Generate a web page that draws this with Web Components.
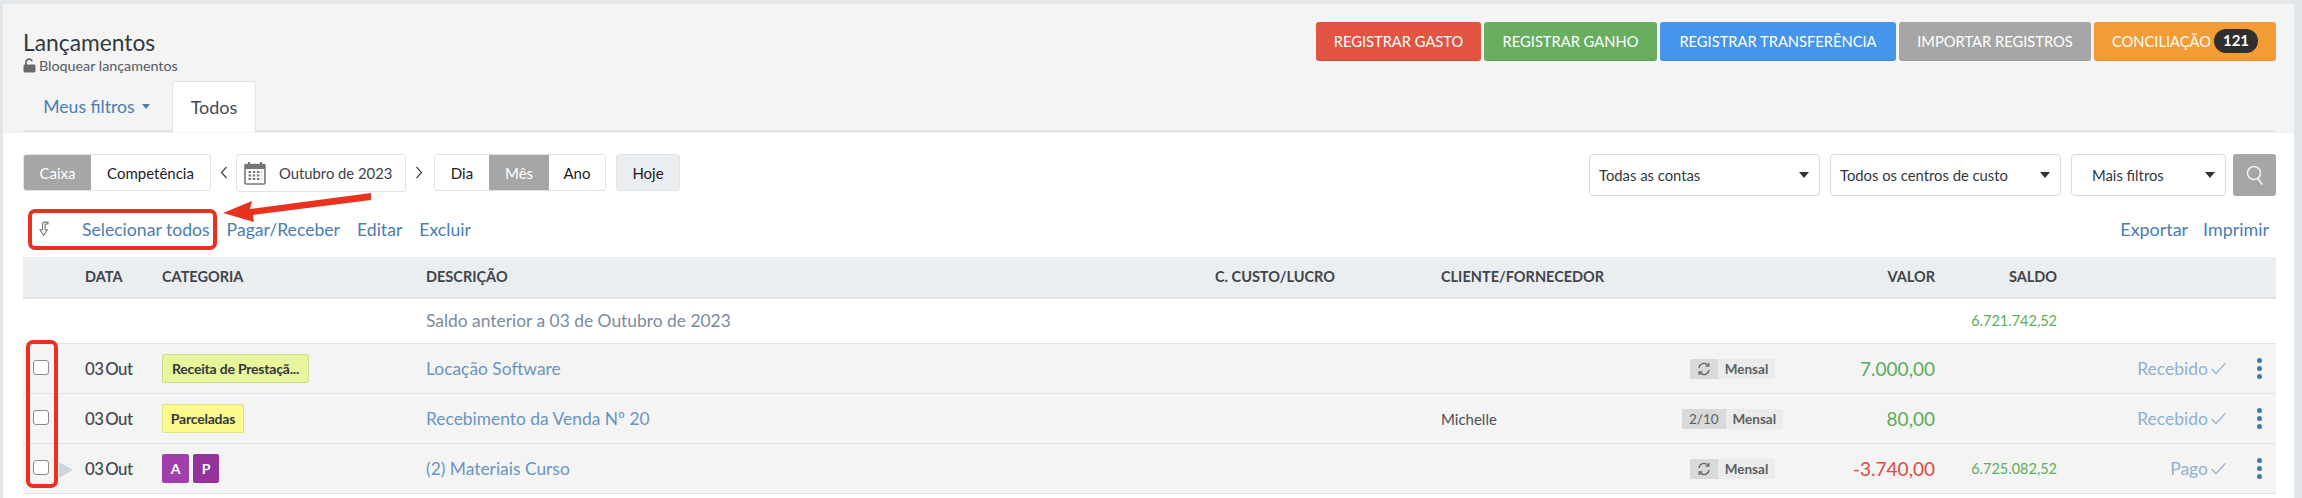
<!DOCTYPE html>
<html lang="pt-BR">
<head>
<meta charset="utf-8">
<title>Lançamentos</title>
<style>
    html, body { margin: 0; padding: 0; background: #fff; }
    body { font-family: Lato, "Liberation Sans", sans-serif; height: 498px; overflow: hidden; }
</style>
</head>
<body>
<lancamentos-page></lancamentos-page>

<script>
class ActionButton extends HTMLElement {
    constructor() {
        super();
        const shadowRoot = this.attachShadow({ mode: 'open' });
        shadowRoot.innerHTML = `
            <style>
                :host {
                    display: flex; align-items: center; justify-content: center;
                    height: 39px; box-sizing: border-box; border-radius: 3px;
                    background: var(--bg); color: #fff; font-size: 14.7px;
                    border-bottom: 1px solid rgba(0,0,0,.08);
                    white-space: nowrap;
                }
            </style>
            <slot></slot>
        `;
    }
    connectedCallback() {
        this.style.setProperty('--bg', this.getAttribute('color'));
        this.style.width = this.getAttribute('w') + 'px';
    }
}

class PageHeader extends HTMLElement {
    constructor() {
        super();
        const shadowRoot = this.attachShadow({ mode: 'open' });
        shadowRoot.innerHTML = `
            <style>
                :host { display: block; height: 129px; background: #f4f4f4; box-sizing: border-box; padding: 18px 18px 0 20px; position: relative; }
                .top { display: flex; justify-content: space-between; height: 59px; }
                h1 { margin: 7px 0 0; font-size: 22.8px; font-weight: 400; line-height: 26px; color: #33383d; }
                .lock { display: flex; align-items: center; gap: 3px; margin-top: 2px; font-size: 14.3px; line-height: 17px; color: #555b61; }
                .buttons { display: flex; gap: 3px; }
                .badge { display: inline-block; margin-left: 3px; width: 44px; height: 24px; line-height: 23px; border-radius: 12px; background: #2f2f2f; color: #fff; font-weight: 700; font-size: 15px; text-align: center; }
                .tabs { display: flex; height: 51px; border-bottom: 2px solid #e2e4e6; box-sizing: border-box; align-items: flex-end; }
                .tab { box-sizing: border-box; height: 51px; display: flex; align-items: center; justify-content: center; font-size: 18px; margin-bottom: -2px; }
                .filters { width: 149px; color: #4a7db3; font-size: 17.6px; gap: 7px; padding-right: 2px; }
                .caret { width: 0; height: 0; border: 4px solid transparent; border-top: 5px solid #4a7db3; border-bottom: 0; }
                .active { width: 84px; background: #fff; color: #444a50; border: 1px solid #e2e4e6; border-bottom: 0; border-radius: 4px 4px 0 0; }
            </style>
            <div class="top">
                <div>
                    <h1>Lançamentos</h1>
                    <div class="lock">
                        <svg width="13" height="15" viewBox="0 0 13 15"><path d="M3 7V4.200a3.200 3.200 0 0 1 6.200-1" fill="none" stroke="#6a6a6a" stroke-width="1.700"/><rect x="0.500" y="6.500" width="12" height="8" rx="1.400" fill="#6a6a6a"/></svg>
                        Bloquear lançamentos
                    </div>
                </div>
                <div class="buttons">
                    <action-button color="#e25341" w="165">REGISTRAR GASTO</action-button>
                    <action-button color="#69ad5f" w="173">REGISTRAR GANHO</action-button>
                    <action-button color="#4596ea" w="236">REGISTRAR TRANSFERÊNCIA</action-button>
                    <action-button color="#a6a6a6" w="192">IMPORTAR REGISTROS</action-button>
                    <action-button color="#f39c35" w="182">CONCILIAÇÃO<span class="badge">121</span></action-button>
                </div>
            </div>
            <div class="tabs">
                <div class="tab filters">Meus filtros <span class="caret"></span></div>
                <div class="tab active">Todos</div>
            </div>
        `;
    }
}

class SegmentGroup extends HTMLElement {
    constructor() {
        super();
        const shadowRoot = this.attachShadow({ mode: 'open' });
        shadowRoot.innerHTML = `
            <style>
                :host { display: inline-flex; height: 37px; box-sizing: border-box; border: 1px solid #e0e2e4; border-radius: 3px; overflow: hidden; background: #fff; }
                .seg { display: flex; align-items: center; justify-content: center; font-size: 15px; color: #1c1c1c; box-sizing: border-box; }
                .on { background: #a6a6a6; color: #fff; }
            </style>
        `;
        this.items = JSON.parse(this.getAttribute('items') || '[]');
        for (const item of this.items) {
            const seg = document.createElement('div');
            seg.className = item.on ? 'seg on' : 'seg';
            seg.style.width = item.w + 'px';
            seg.textContent = item.t;
            shadowRoot.appendChild(seg);
        }
    }
}

class FilterSelect extends HTMLElement {
    constructor() {
        super();
        const shadowRoot = this.attachShadow({ mode: 'open' });
        shadowRoot.innerHTML = `
            <style>
                :host { display: flex; align-items: center; justify-content: space-between; height: 42px; box-sizing: border-box; border: 1px solid #d8dadc; border-radius: 4px; background: #fff; font-size: 14.8px; color: #33383d; padding: 0 10px 0 9px; }
                i { width: 0; height: 0; border: 5px solid transparent; border-top: 6px solid #333; border-bottom: 0; }
            </style>
            <span><slot></slot></span><i></i>
        `;
    }
}

class ToolBar extends HTMLElement {
    constructor() {
        super();
        const shadowRoot = this.attachShadow({ mode: 'open' });
        shadowRoot.innerHTML = `
            <style>
                :host { display: flex; justify-content: space-between; align-items: flex-start; height: 42px; }
                .left, .right { display: flex; align-items: flex-start; }
                .chev { display: flex; width: 25px; height: 37px; align-items: center; justify-content: center; }
                .date { display: flex; align-items: center; width: 170px; height: 38px; box-sizing: border-box; border: 1px solid #e0e2e4; border-radius: 3px; padding-left: 7px; gap: 13px; font-size: 14.8px; color: #3c4147; }
                .hoje { display: flex; align-items: center; justify-content: center; width: 64px; height: 37px; margin-left: 10px; box-sizing: border-box; background: #ebeef0; border: 1px solid #e0e2e4; border-radius: 3px; font-size: 15px; color: #1c1c1c; }
                .search { display: flex; align-items: center; justify-content: center; width: 43px; height: 42px; margin-left: 7px; background: #a6a6a6; border-radius: 3px; }
            </style>
            <div class="left">
                <segment-group items='[{"t":"Caixa","w":67,"on":1},{"t":"Competência","w":119}]'></segment-group>
                <div class="chev"><svg width="8" height="13" viewBox="0 0 8 13"><path d="M6.500 1L1.500 6.500L6.500 12" fill="none" stroke="#444" stroke-width="1.200"/></svg></div>
                <div class="date">
                    <svg width="22" height="24" viewBox="0 0 22 24"><path d="M5 1v5M17 1v5" stroke="#777" stroke-width="2"/><rect x="1" y="3.500" width="20" height="19.500" rx="1" fill="none" stroke="#777" stroke-width="1.600"/><rect x="1" y="3.500" width="20" height="4.500" fill="#777"/><path d="M4.500 11h13M4.500 14.500h13M4.500 18h13" stroke="#777" stroke-width="2" stroke-dasharray="2.500 1.700"/></svg>
                    <span>Outubro de 2023</span>
                </div>
                <div class="chev"><svg width="8" height="13" viewBox="0 0 8 13"><path d="M1.500 1L6.500 6.500L1.500 12" fill="none" stroke="#444" stroke-width="1.200"/></svg></div>
                <segment-group style="margin-left:3px" items='[{"t":"Dia","w":54},{"t":"Mês","w":60,"on":1},{"t":"Ano","w":56}]'></segment-group>
                <div class="hoje">Hoje</div>
            </div>
            <div class="right">
                <filter-select style="width:231px">Todas as contas</filter-select>
                <filter-select style="width:231px;margin-left:10px">Todos os centros de custo</filter-select>
                <filter-select style="width:155px;margin-left:10px;padding-left:20px">Mais filtros</filter-select>
                <div class="search"><svg width="18" height="20" viewBox="0 0 18 20"><circle cx="8" cy="8" r="6.500" fill="none" stroke="#f2f2f2" stroke-width="1.500"/><path d="M12 13.500L16 19.500" stroke="#f2f2f2" stroke-width="1.800"/></svg></div>
            </div>
        `;
    }
}

class ActionRow extends HTMLElement {
    constructor() {
        super();
        const shadowRoot = this.attachShadow({ mode: 'open' });
        shadowRoot.innerHTML = `
            <style>
                :host { display: flex; justify-content: space-between; align-items: center; height: 61px; box-sizing: border-box; padding-top: 5px; font-size: 17.6px; color: #4a7db3; }
                .left, .right { display: flex; align-items: center; }
                .arrow { margin-left: 15px; width: 44px; display: flex; }
                .left span { margin-right: 17px; }
                .right { padding-right: 7px; font-size: 17.9px; }
                .right span { margin-left: 15px; }
            </style>
            <div class="left">
                <div class="arrow"><svg width="12" height="16" viewBox="0 0 16 22"><path d="M13.500 1.500H9C7 1.500 6 3 6 4.500V12H2.500L7.500 20L12.500 12H9.500V5.500C9.500 4.500 10 4 11 4H13.500Z" fill="none" stroke="#777" stroke-width="1.500"/></svg></div>
                <span>Selecionar todos</span><span>Pagar/Receber</span><span>Editar</span><span>Excluir</span>
            </div>
            <div class="right"><span>Exportar</span><span>Imprimir</span></div>
        `;
    }
}

const rowColumns = '62px 77px 264px 789px 226px 244px 95px 155px 122px 170px 49px';

class TableHead extends HTMLElement {
    constructor() {
        super();
        const shadowRoot = this.attachShadow({ mode: 'open' });
        shadowRoot.innerHTML = `
            <style>
                :host { display: grid; grid-template-columns: ${rowColumns}; align-items: center; height: 42px; box-sizing: border-box; padding-bottom: 2px; background: #ebeef1; border-bottom: 2px solid #e2e4e6; font-size: 14.500px; font-weight: 700; color: #3f454b; }
                .r { text-align: right; }
            </style>
            <div></div><div>DATA</div><div>CATEGORIA</div><div>DESCRIÇÃO</div><div>C. CUSTO/LUCRO</div><div>CLIENTE/FORNECEDOR</div><div></div>
            <div class="r">VALOR</div><div class="r">SALDO</div><div></div><div></div>
        `;
    }
}

class BalanceRow extends HTMLElement {
    constructor() {
        super();
        const shadowRoot = this.attachShadow({ mode: 'open' });
        shadowRoot.innerHTML = `
            <style>
                :host { display: grid; grid-template-columns: ${rowColumns}; align-items: center; height: 45px; box-sizing: border-box; padding-bottom: 2px; border-bottom: 1px solid #dfe1e3; background: #fff; }
                .d { grid-column: 4 / 9; font-size: 17.4px; color: #7a8b9a; }
                .s { grid-column: 9; text-align: right; font-size: 14.500px; color: #5cac5a; }
            </style>
            <div class="d"><slot name="desc"></slot></div>
            <div class="s"><slot name="saldo"></slot></div>
        `;
    }
}

class EntryRow extends HTMLElement {
    constructor() {
        super();
        const shadowRoot = this.attachShadow({ mode: 'open' });
        const a = (n) => this.getAttribute(n) || '';
        const refresh = '<svg width="14" height="14" viewBox="0 0 14 14" fill="none" stroke="#666" stroke-width="1.300"><path d="M2 6a5 5 0 0 1 9-2.500"/><path d="M12 8a5 5 0 0 1-9 2.500"/><path d="M11.800 1v3.200H8.600" /><path d="M2.200 13V9.800H5.400"/></svg>';
        shadowRoot.innerHTML = `
            <style>
                :host { display: grid; grid-template-columns: ${rowColumns}; align-items: center; height: 50px; box-sizing: border-box; border-bottom: 1px solid #dfe1e3; background: #f4f4f4; position: relative; }
                input { appearance: none; margin: -2px 0 0 10px; width: 16px; height: 15px; box-sizing: border-box; border: 1px solid #8a8a8a; border-radius: 3px; background: #fff; display: block; }
                .date { font-size: 16.800px; font-weight: 500; color: #43484d; letter-spacing: -0.500px; word-spacing: -2px; }
                .cat { display: flex; gap: 4px; align-items: center; }
                .desc { font-size: 17.4px; color: #6a94bf; margin-top: -1px; }
                .client { font-size: 15px; color: #4b5056; }
                .rec { justify-self: center; display: inline-flex; height: 20px; border-radius: 2px; overflow: hidden; background: #ebebeb; font-size: 13.500px; font-weight: 700; color: #5a5f64; align-items: stretch; white-space: nowrap; }
                .rec b { font-weight: 400; display: flex; align-items: center; justify-content: center; background: #d9d9d9; padding: 0 7px; }
                .rec span { display: flex; align-items: center; padding: 0 7px; }
                .val { text-align: right; font-size: 19px; color: var(--val); }
                .saldo { text-align: right; font-size: 14.500px; color: #5cac5a; }
                .status { display: flex; justify-content: flex-end; align-items: center; gap: 2px; font-size: 17.500px; color: #8fb0d0; }
                .dots { display: flex; flex-direction: column; align-items: center; gap: 3px; width: 6px; margin-left: 29px; }
                .dots i { width: 5px; height: 5px; border-radius: 50%; background: #3f78b5; }
                .pin { position: absolute; left: 36px; top: 18px; width: 0; height: 0; border-left: 14px solid #ccd6dc; border-top: 8px solid transparent; border-bottom: 8px solid transparent; }
            </style>
            <div><input type="checkbox"></div>
            <div class="date">${a('date')}</div>
            <div class="cat"><slot name="cat"></slot></div>
            <div class="desc">${a('desc')}</div>
            <div></div>
            <div class="client">${a('client')}</div>
            <div class="rec"><b>${a('parc') || refresh}</b><span>Mensal</span></div>
            <div class="val" style="--val:${a('neg') ? '#dd4b41' : '#5cac5a'}">${a('val')}</div>
            <div class="saldo">${a('saldo')}</div>
            <div class="status">${a('status')}<svg width="17" height="15" viewBox="0 0 20 16"><path d="M2 8.500L7 14L18 2" fill="none" stroke="#8fb0d0" stroke-width="1.600"/></svg></div>
            <div><div class="dots"><i></i><i></i><i></i></div></div>
            ${a('pin') ? '<div class="pin"></div>' : ''}
        `;
    }
}

class CatTag extends HTMLElement {
    constructor() {
        super();
        const shadowRoot = this.attachShadow({ mode: 'open' });
        shadowRoot.innerHTML = `
            <style>
                :host { display: inline-flex; align-items: center; justify-content: center; height: 29px; box-sizing: border-box; border: 1px solid rgba(0,0,0,.1); border-radius: 2px; font-size: 14px; font-weight: 700; color: #33383d; letter-spacing: -0.200px; white-space: nowrap; }
            </style>
            <slot></slot>
        `;
    }
    connectedCallback() {
        this.style.background = this.getAttribute('color');
        this.style.width = this.getAttribute('w') + 'px';
        if (this.hasAttribute('light')) {this.style.color = '#fff'; this.style.border = '0';}
    }
}

class LancamentosPage extends HTMLElement {
    constructor() {
        super();
        const shadowRoot = this.attachShadow({ mode: 'open' });
        shadowRoot.innerHTML = `
            <style>
                :host { display: block; position: relative; box-sizing: border-box; width: 2302px; height: 498px; border-top: 4px solid #e4e7ea; border-left: 3px solid #e4e7ea; border-right: 8px solid #e4e7ea; font-family: Lato, "Liberation Sans", sans-serif; }
                .content { padding: 21px 18px 0 20px; }
                .mark { position: absolute; border: 4px solid #e8321f; border-radius: 7px; box-sizing: border-box; }
                .arrow { position: absolute; left: 0; top: 0; }
            </style>
            <page-header></page-header>
            <div class="content">
                <tool-bar></tool-bar>
                <action-row></action-row>
                <table-head></table-head>
                <balance-row>
                    <span slot="desc">Saldo anterior a 03 de Outubro de 2023</span>
                    <span slot="saldo">6.721.742,52</span>
                </balance-row>
                <entry-row date="03 Out" desc="Locação Software" val="7.000,00" status="Recebido">
                    <cat-tag slot="cat" color="#e8f59c" w="147">Receita de Prestaçã...</cat-tag>
                </entry-row>
                <entry-row date="03 Out" desc="Recebimento da Venda Nº 20" client="Michelle" parc="2/10" val="80,00" status="Recebido">
                    <cat-tag slot="cat" color="#fbfb8e" w="82">Parceladas</cat-tag>
                </entry-row>
                <entry-row date="03 Out" desc="(2) Materiais Curso" val="-3.740,00" neg="1" saldo="6.725.082,52" status="Pago" pin="1">
                    <cat-tag slot="cat" color="#a03fab" w="27" light>A</cat-tag>
                    <cat-tag slot="cat" color="#93339b" w="26" light>P</cat-tag>
                </entry-row>
            </div>
            <div class="mark" style="left:25px;top:205px;width:189px;height:41px"></div>
            <div class="mark" style="left:23px;top:336px;width:32px;height:148px"></div>
            <svg class="arrow" width="400" height="240"><polygon points="220,209 249,197 247,205 368,189 368,196 250,211 251,218" fill="#e8321f"/></svg>
        `;
    }
}

customElements.define('action-button', ActionButton);
customElements.define('page-header', PageHeader);
customElements.define('segment-group', SegmentGroup);
customElements.define('filter-select', FilterSelect);
customElements.define('tool-bar', ToolBar);
customElements.define('action-row', ActionRow);
customElements.define('table-head', TableHead);
customElements.define('balance-row', BalanceRow);
customElements.define('entry-row', EntryRow);
customElements.define('cat-tag', CatTag);
customElements.define('lancamentos-page', LancamentosPage);
</script>
</body>
</html>
